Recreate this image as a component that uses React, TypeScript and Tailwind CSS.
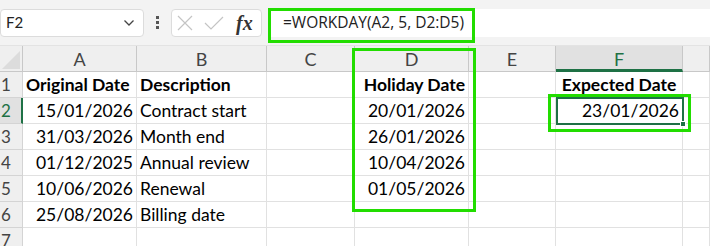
import React from "react";

const cols = ["A", "B", "C", "D", "E", "F", ""];
const rows: (string | { t: string; b?: boolean; r?: boolean; c?: boolean })[][] = [
  [{ t: "Original Date", b: true }, { t: "Description", b: true }, "", { t: "Holiday Date", b: true, r: true }, "", { t: "Expected Date", b: true, c: true }, ""],
  [{ t: "15/01/2026", r: true }, "Contract start", "", { t: "20/01/2026", r: true }, "", { t: "23/01/2026", r: true }, ""],
  [{ t: "31/03/2026", r: true }, "Month end", "", { t: "26/01/2026", r: true }, "", "", ""],
  [{ t: "01/12/2025", r: true }, "Annual review", "", { t: "10/04/2026", r: true }, "", "", ""],
  [{ t: "10/06/2026", r: true }, "Renewal", "", { t: "01/05/2026", r: true }, "", "", ""],
  [{ t: "25/08/2026", r: true }, "Billing date", "", "", "", "", ""],
  ["", "", "", "", "", "", ""],
];

export default function App() {
  return (
    <div className="relative w-[710px] h-[246px] overflow-hidden bg-white" style={{ fontFamily: "Lato, 'Open Sans', sans-serif" }}>
      {/* Top bar */}
      <div className="h-[46px] bg-[#f3f3f3] flex items-center pl-0 border-b border-[#e3e3e3]">
        <div className="w-[144px] h-[28px] bg-white border border-[#dcdcdc] rounded-[4px] flex items-center justify-between pl-[5px] pr-[8px] text-[15px] text-[#222]">
          <span>F2</span>
          <svg width="12" height="8" viewBox="0 0 12 8"><path d="M1.5 1.5 L6 6 L10.5 1.5" fill="none" stroke="#444" strokeWidth="1.3" /></svg>
        </div>
        <div className="w-[27px] flex flex-col items-center gap-[2px]">
          <div className="w-[3px] h-[3px] bg-[#555]" />
          <div className="w-[3px] h-[3px] bg-[#555]" />
          <div className="w-[3px] h-[3px] bg-[#555]" />
        </div>
        <div className="w-[91px] h-[28px] bg-white border border-[#dcdcdc] rounded-[4px] flex items-center pl-[5px] gap-[11px]">
          <svg width="16" height="16" viewBox="0 0 16 16"><path d="M1 1 L15 15 M15 1 L1 15" stroke="#c4c4c4" strokeWidth="1.2" /></svg>
          <svg width="20" height="16" viewBox="0 0 20 16"><path d="M1 8 L7 14 L19 2" fill="none" stroke="#c4c4c4" strokeWidth="1.2" /></svg>
          <span className="text-[20px] italic font-bold text-[#333] leading-none ml-[1px]" style={{ fontFamily: "'Liberation Serif', 'DejaVu Serif', serif" }}>fx</span>
        </div>
        <div className="ml-[8px] flex-1 h-[28px] bg-white flex items-center pl-[13px] text-[15.5px] text-[#222]" style={{ fontFamily: "'Open Sans', sans-serif" }}>
          =WORKDAY(A2, 5, D2:D5)
        </div>
      </div>

      {/* Grid */}
      <div className="grid grid-cols-[23px_114px_130px_88px_114px_87px_127px_27px]">
        {/* header row */}
        <div className="h-[26px] bg-[#efefef] border-r border-b border-[#c8c8c8] relative">
          <svg className="absolute right-[2px] bottom-[2px]" width="18" height="18" viewBox="0 0 18 18"><path d="M18 0 L18 18 L0 18 Z" fill="#dcdcdc" /></svg>
        </div>
        {cols.map((c, k) => (
          <div
            key={k}
            className={
              c === "F"
                ? "h-[26px] bg-[#e1e1e1] border-r border-[#c8c8c8] border-b-[3px] border-b-[#1e7145] flex items-center justify-center text-[18px] text-[#1e7145] leading-none pt-[2px]"
                : "h-[26px] bg-[#efefef] border-r border-b border-[#c8c8c8] flex items-center justify-center text-[18px] text-[#444] leading-none"
            }
          >
            {c}
          </div>
        ))}
        {rows.map((row, i) => (
          <React.Fragment key={i}>
            <div
              className={
                i === 1
                  ? "h-[26px] bg-[#e1e1e1] border-r-2 border-r-[#1e7145] border-b border-b-[#d4d4d4] flex items-center pl-[1px] text-[17px] text-[#1e7145]"
                  : "h-[26px] bg-[#efefef] border-r border-b border-[#d4d4d4] flex items-center pl-[1px] text-[17px] text-[#444]"
              }
            >
              {i + 1}
            </div>
            {row.map((cell, j) => {
              const c = typeof cell === "string" ? { t: cell } : cell;
              return (
                <div
                  key={j}
                  className={
                    "h-[26px] border-r border-b border-[#e1e1e1] flex items-center whitespace-nowrap text-[17.5px] text-black leading-none px-[3px] " +
                    (c.r ? "justify-end " : c.c ? "justify-center " : "justify-start ") +
                    (c.b ? "font-bold " : "")
                  }
                >
                  {c.t}
                </div>
              );
            })}
          </React.Fragment>
        ))}
      </div>

      {/* selected cell F2 */}
      <div className="absolute left-[556px] top-[97px] w-[128px] h-[28px] border-2 border-[#1e7145]" />
      <div className="absolute left-[680px] top-[121px] w-[6px] h-[6px] bg-[#1e7145] border border-white" />

      {/* green highlight boxes */}
      <div className="absolute left-[268px] top-[8px] w-[207px] h-[35px] border-[3px] border-[#22dd00]" />
      <div className="absolute left-[352px] top-[48px] w-[124px] h-[164px] border-[3px] border-[#22dd00]" />
      <div className="absolute left-[548px] top-[94px] w-[143px] h-[38px] border-[3px] border-[#22dd00]" />
    </div>
  );
}
